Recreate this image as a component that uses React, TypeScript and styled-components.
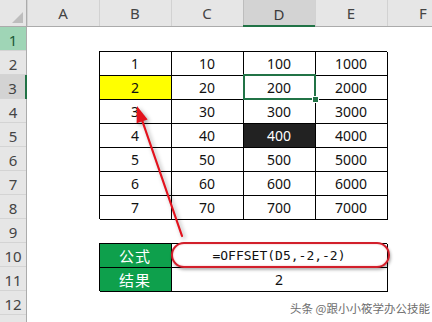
import React from 'react';
import styled, { createGlobalStyle } from 'styled-components';

const GlobalStyle = createGlobalStyle`
  html, body {
    margin: 0;
    padding: 0;
    background: #fff;
    overflow: hidden;
  }
  body {
    font-family: "Noto Sans", "Noto Sans CJK SC", sans-serif;
  }
`;

const Sheet = styled.div`
  position: relative;
  width: 432px;
  height: 322px;
  overflow: hidden;
  display: grid;
  grid-template-columns: 27px repeat(6, 72px);
  grid-template-rows: 27px repeat(13, 24px);
`;

const Corner = styled.div`
  position: relative;
  background: #e6e6e6;
  border-right: 1px solid #ababab;
  border-bottom: 1px solid #ababab;
  box-sizing: border-box;

  &::after {
    content: '';
    position: absolute;
    right: 3px;
    bottom: 3px;
    border-style: solid;
    border-width: 0 0 11px 11px;
    border-color: transparent transparent #bdbdbd transparent;
  }
`;

interface IColHead {
    $active?: boolean;
}

const ColHead = styled.div<IColHead>`
    display: flex;
    align-items: center;
    justify-content: center;
    box-sizing: border-box;
    padding-top: ${({$active}) => $active ? '2px' : '0'};
    background: ${({$active}) => $active ? '#d3d3d3' : '#e6e6e6'};
    border-bottom: ${({$active}) => $active ? '2px solid #217346' : '1px solid #ababab'};
    box-shadow: inset 1px 0 0 ${({$active}) => $active ? '#bdbdbd' : '#d2d2d2'};
    color: ${({$active}) => $active ? '#3b3b3b' : '#444'};
    font-size: 15px;
`;

type RowState = 'normal' | 'active' | 'highlight';

interface IRowHead {
    $state: RowState;
}

const rowBg: Record<RowState, string> = {
    normal: '#e6e6e6',
    active: '#d3d3d3',
    highlight: '#9fd5b6',
};

const RowHead = styled.div<IRowHead>`
    display: flex;
    align-items: center;
    justify-content: center;
    box-sizing: border-box;
    background: ${({$state}) => rowBg[$state]};
    border-right: ${({$state}) => $state === 'active' ? '2px solid #217346' : '1px solid #ababab'};
    box-shadow: inset 0 -1px 0 #d4d4d4;
    color: ${({$state}) => $state === 'highlight' ? '#1d5a38' : '#444'};
    font-size: 15px;
    padding-top: 1px;
`;

interface ICell {
    $boxed?: boolean;
    $bg?: string;
    $color?: string;
    $span?: number;
    $selected?: boolean;
    $mono?: boolean;
}

const Cell = styled.div<ICell>`
    position: ${({$selected}) => $selected ? 'relative' : 'static'};
    grid-column: span ${({$span}) => $span ?? 1};
    display: flex;
    align-items: center;
    justify-content: center;
    background: ${({$bg, $boxed}) => $bg ?? ($boxed ? '#fff' : 'transparent')};
    color: ${({$color}) => $color ?? '#111'};
    box-shadow: ${({$boxed}) => $boxed ? 'inset 1px 1px 0 #000, 1px 1px 0 #000' : 'none'};
    font-family: ${({$mono}) => $mono
        ? '"DejaVu Sans Mono", "Liberation Mono", monospace'
        : '"Noto Sans", "Noto Sans CJK SC", sans-serif'};
    font-size: ${({$mono}) => $mono ? '13px' : '14px'};
    padding-top: 1px;
    box-sizing: border-box;

    ${({$selected}) => $selected && `
        &::after {
            content: '';
            position: absolute;
            top: -1px;
            left: 0;
            right: -1px;
            bottom: -1px;
            border: 2px solid #217346;
        }
        &::before {
            content: '';
            position: absolute;
            right: -4px;
            bottom: -4px;
            width: 5px;
            height: 5px;
            background: #217346;
            border: 1px solid #fff;
            z-index: 2;
        }
    `}
`;

const LabelCell = styled(Cell)`
    font-family: "Noto Sans CJK SC", sans-serif;
    font-size: 15px;
    letter-spacing: 1px;
`;

const FormulaRing = styled.div`
    position: absolute;
    left: 171px;
    top: 242px;
    width: 219px;
    height: 26px;
    box-sizing: border-box;
    border: 2px solid #d21f2b;
    border-radius: 13px;
    box-shadow: 1px 2px 3px rgba(0, 0, 0, 0.3), inset 0 0 2px rgba(210, 31, 43, 0.35);
    pointer-events: none;
`;

const ArrowLayer = styled.svg`
    position: absolute;
    left: 0;
    top: 0;
    width: 432px;
    height: 322px;
    pointer-events: none;
    filter: drop-shadow(2px 2px 2px rgba(0, 0, 0, 0.35));
`;

const Watermark = styled.div`
    position: absolute;
    left: 290px;
    top: 300px;
    font-family: "Noto Sans CJK SC", sans-serif;
    font-size: 11.5px;
    color: #6e6e6e;
    white-space: nowrap;
    text-shadow: 0 0 2px #fff;
`;

const columns = ['A', 'B', 'C', 'D', 'E', 'F'];

const table: string[][] = [
    ['1', '10', '100', '1000'],
    ['2', '20', '200', '2000'],
    ['3', '30', '300', '3000'],
    ['4', '40', '400', '4000'],
    ['5', '50', '500', '5000'],
    ['6', '60', '600', '6000'],
    ['7', '70', '700', '7000'],
];

const rowState = (row: number): RowState => {
    if (row === 1) return 'highlight';
    if (row === 3) return 'active';
    return 'normal';
};

const GREEN = '#0ea04c';

// the last row only peeks in at the bottom edge, its number is out of view
const LAST_VISIBLE_LABEL = 12;

const renderRow = (row: number) => {
    const head = (
        <RowHead key={`h${row}`} $state={rowState(row)}>
            {row <= LAST_VISIBLE_LABEL ? row : null}
        </RowHead>
    );

    if (row >= 2 && row <= 8) {
        const values = table[row - 2];
        return [
            head,
            <Cell key={`${row}A`} />,
            ...values.map((v, i) => {
                const isB3 = row === 3 && i === 0;
                const isD5 = row === 5 && i === 2;
                const isD3 = row === 3 && i === 2;
                return (
                    <Cell
                        key={`${row}${i}`}
                        $boxed
                        $bg={isB3 ? '#ffff00' : isD5 ? '#222' : undefined}
                        $color={isD5 ? '#fff' : undefined}
                        $selected={isD3}
                    >
                        {v}
                    </Cell>
                );
            }),
            <Cell key={`${row}F`} />,
        ];
    }

    if (row === 10 || row === 11) {
        return [
            head,
            <Cell key={`${row}A`} />,
            <LabelCell key={`${row}B`} $boxed $bg={GREEN} $color="#fff">
                {row === 10 ? '公式' : '结果'}
            </LabelCell>,
            <Cell key={`${row}C`} $boxed $span={3} $mono={row === 10}>
                {row === 10 ? '=OFFSET(D5,-2,-2)' : '2'}
            </Cell>,
            <Cell key={`${row}F`} />,
        ];
    }

    return [head, ...columns.map(c => <Cell key={`${row}${c}`} />)];
};

const App = () => {
    const rows = Array.from({ length: 13 }, (_, i) => i + 1);

    return (
        <>
            <GlobalStyle />
            <Sheet>
                <Corner />
                {columns.map(c => (
                    <ColHead key={c} $active={c === 'D'}>{c}</ColHead>
                ))}
                {rows.map(renderRow)}

                <FormulaRing />
                <ArrowLayer viewBox="0 0 432 322">
                    <line x1="142" y1="120" x2="182" y2="236" stroke="#e3121d" strokeWidth="2.2" strokeLinecap="round" />
                    <polygon points="137,106 147.6,119.5 136.6,123.2" fill="#e3121d" />
                </ArrowLayer>
                <Watermark>头条 @跟小小筱学办公技能</Watermark>
            </Sheet>
        </>
    );
};

export default App;
